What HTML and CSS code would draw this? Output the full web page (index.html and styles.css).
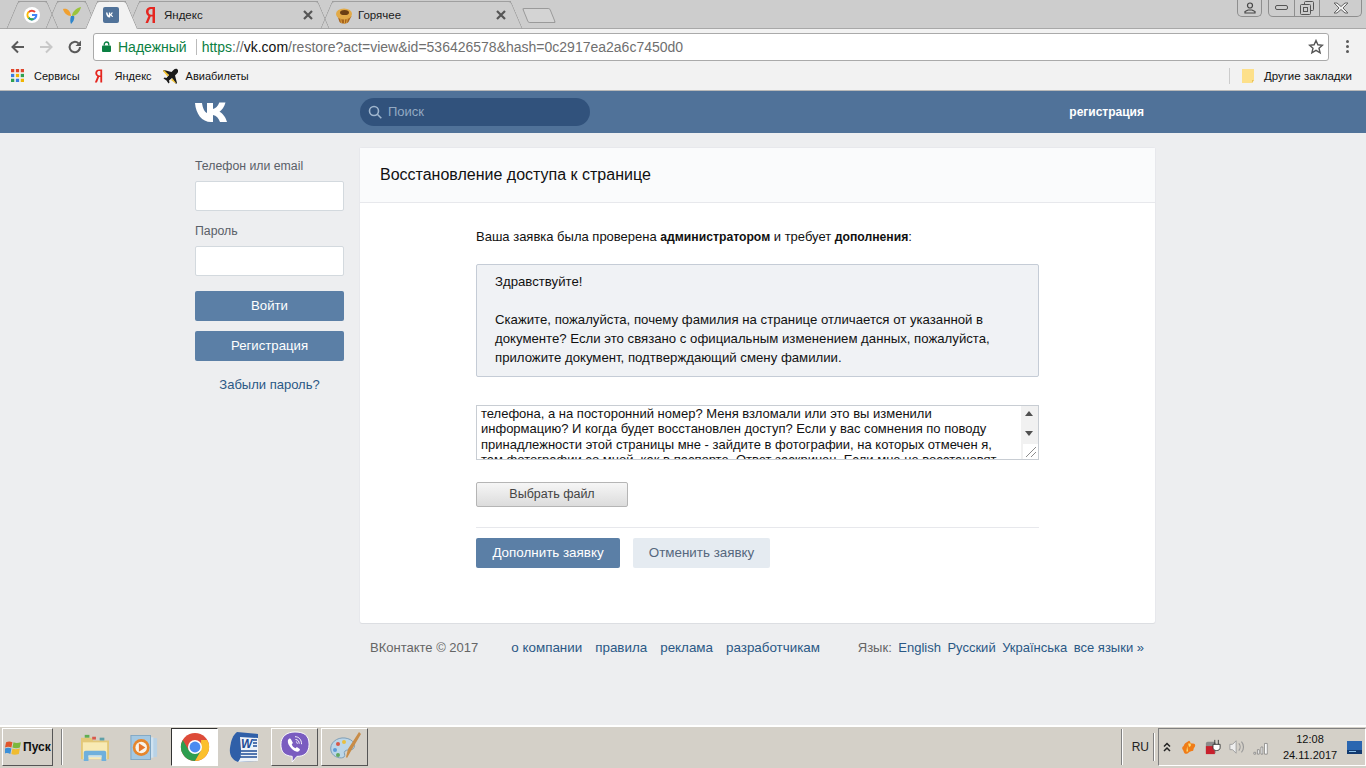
FILE: index.html
```html
<!DOCTYPE html>
<html lang="ru">
<head>
  <meta charset="UTF-8">
  <meta name="viewport" content="width=device-width, initial-scale=1.0">
  <title>Восстановление доступа к странице</title>
  <link rel="stylesheet" href="styles.css">
</head>
<body>
  <div class="browser">
    <div class="tabstrip">
      <div class="tab tab-pin">
        <svg class="tab-icon" viewBox="0 0 16 16"><circle cx="8" cy="8" r="8" fill="#fff"/><path d="M8 8h4.300a4.300 4.300 0 0 1-7.600 2.800" fill="none" stroke="#4285f4" stroke-width="2"/><path d="M4.700 5.200A4.300 4.300 0 0 1 11 5" fill="none" stroke="#ea4335" stroke-width="2"/><path d="M4.400 10.400A4.300 4.300 0 0 0 9.500 12" fill="none" stroke="#34a853" stroke-width="2"/><path d="M4.800 4.800A4.300 4.300 0 0 0 4.600 10.800" fill="none" stroke="#fbbc05" stroke-width="2"/></svg>
      </div>
      <div class="tab tab-pin">
        <svg class="tab-icon tab-icon-big" viewBox="0 0 18 17"><path d="M0 2c4-1 7 1 8 7C4 9 1 6 0 2z" fill="#f0a030"/><path d="M18 0c-1 5-5 9-9 9 0-4 4-8 9-9z" fill="#9cc43c"/><path d="M8 9h3c1 3-1 6-3 8-1-2-1-5 0-8z" fill="#2f86cc"/></svg>
      </div>
      <div class="tab tab-pin tab-active">
        <svg class="tab-icon" viewBox="0 0 16 16"><rect width="16" height="16" rx="2" fill="#507299"/><path d="M3 5.500h1.400c.3 1.500 1 2.700 1.500 2.900V5.500h1.300V7c.5 0 1-.7 1.300-1.500h1.300c-.2 1-.9 1.800-1.400 2.200.5.300 1.300 1 1.700 2.300H9c-.3-.9-1-1.500-1.800-1.600V10.500h-.4C4.500 10.500 3.200 8.500 3 5.500z" fill="#fff"/></svg>
      </div>
      <div class="tab tab-wide tab-ya">
        <svg class="tab-icon" viewBox="0 0 16 16"><path d="M12 0H8.200C5 0 3 2 3 4.800c0 2 .9 3.300 2.400 4.200L2.500 16H5l2.700-6.500H9.500V16H12zM9.500 7.700H8.300C6.600 7.700 5.500 6.600 5.500 4.800 5.500 3 6.700 2 8.300 2h1.200z" fill="#e52620"/></svg>
        <span class="tab-title">Яндекс</span>
        <svg class="tab-close" viewBox="0 0 10 10"><path d="M1 1l8 8M9 1l-8 8" stroke="#555" stroke-width="2.200"/></svg>
      </div>
      <div class="tab tab-wide tab-hot">
        <svg class="tab-icon tab-icon-big" viewBox="0 0 17 17"><path d="M2 9l2 6c2 2 7 2 9 0l3-6z" fill="#a8641c"/><ellipse cx="8.500" cy="7" rx="8" ry="5.500" fill="#e2aa48"/><ellipse cx="9" cy="5.500" rx="4.500" ry="2.600" fill="#6b3f14"/><path d="M5 11l1 5M9 12v5M12 11l-1 5" stroke="#d9a040"/></svg>
        <span class="tab-title">Горячее</span>
        <svg class="tab-close" viewBox="0 0 10 10"><path d="M1 1l8 8M9 1l-8 8" stroke="#555" stroke-width="2.200"/></svg>
      </div>
      <div class="tab-new"></div>
      <div class="window-btns">
        <div class="win-user">
          <svg viewBox="0 0 14 12" width="14" height="12"><circle cx="7" cy="3.500" r="2.500" fill="none" stroke="#444" stroke-width="1.200"/><path d="M2 11V9.500L5 8h4l3 1.500V11z" fill="none" stroke="#444" stroke-width="1.200"/></svg>
        </div>
        <div class="win-group">
          <div class="win-btn win-min"><svg viewBox="0 0 14 6" width="14" height="6"><rect x=".5" y=".5" width="12" height="4" rx="1.500" fill="none" stroke="#555"/></svg></div>
          <div class="win-btn win-max"><svg viewBox="0 0 14 14" width="14" height="14"><rect x="4.500" y=".5" width="9" height="9" rx="1" fill="none" stroke="#555"/><rect x=".5" y="3.500" width="10" height="10" rx="1" fill="#ccc" stroke="#555"/><rect x="3.500" y="6.500" width="4" height="4" fill="none" stroke="#555"/></svg></div>
          <div class="win-btn win-close"><svg viewBox="0 0 16 12" width="16" height="12"><path d="M1 1h3l4 3.500L12 1h3l-5 5 5 5h-3L8 7.500 4 11H1l5-5z" fill="#eee" stroke="#666"/></svg></div>
        </div>
      </div>
    </div>

    <div class="toolbar">
      <svg class="nav-icon" viewBox="0 0 16 16"><path d="M14 8H3M8 2.500L2.500 8 8 13.500" fill="none" stroke="#5a5a5a" stroke-width="2"/></svg>
      <svg class="nav-icon" viewBox="0 0 16 16"><path d="M2 8h11M8 2.500L13.500 8 8 13.500" fill="none" stroke="#c8c8c8" stroke-width="2"/></svg>
      <svg class="nav-icon" viewBox="0 0 16 16"><path d="M13 8a5.200 5.200 0 1 1-1.600-3.700" fill="none" stroke="#5a5a5a" stroke-width="2"/><path d="M14 1.500v5.500H8.500z" fill="#5a5a5a"/></svg>
      <div class="omnibox">
        <svg class="lock" viewBox="0 0 10 12"><path d="M2.500 5V3.500a2.500 2.500 0 0 1 5 0V5" fill="none" stroke="#0b8043" stroke-width="1.500"/><rect y="5" width="10" height="7" rx="1" fill="#0b8043"/></svg>
        <span class="secure">Надежный</span>
        <span class="omni-sep"></span>
        <span class="url"><span class="url-https">https</span>://<span class="url-host">vk.com</span>/restore?act=view&amp;id=536426578&amp;hash=0c2917ea2a6c7450d0</span>
        <svg class="star" viewBox="0 0 16 16"><path d="M8 1.500l1.900 4.300 4.600.4-3.500 3 1.100 4.600L8 11.400l-4.100 2.400L5 9.200l-3.500-3 4.600-.4z" fill="none" stroke="#555" stroke-width="1.400"/></svg>
      </div>
      <div class="menu-dots"><i></i><i></i><i></i></div>
    </div>

    <div class="bookmarks">
      <svg class="bm-icon apps" viewBox="0 0 12 12">
        <rect width="3" height="3" fill="#e0452c"/><rect x="4.500" width="3" height="3" fill="#e0452c"/><rect x="9" width="3" height="3" fill="#e0452c"/>
        <rect y="4.500" width="3" height="3" fill="#3a7de0"/><rect x="4.500" y="4.500" width="3" height="3" fill="#f0b400"/><rect x="9" y="4.500" width="3" height="3" fill="#2fa050"/>
        <rect y="9" width="3" height="3" fill="#2fa050"/><rect x="4.500" y="9" width="3" height="3" fill="#3a7de0"/><rect x="9" y="9" width="3" height="3" fill="#f0b400"/>
      </svg>
      <span class="bm-label bm-services">Сервисы</span>
      <svg class="bm-icon ya" viewBox="0 0 12 16"><path d="M10 1H7C4 1 2.500 2.700 2.500 4.800c0 1.800.8 2.900 2.200 3.800L2 15h2.300l2.400-6H8v6h2zM8 7.400H7C5.600 7.400 4.500 6.500 4.500 4.800 4.500 3.200 5.600 2.500 7 2.500h1z" fill="#e52620"/></svg>
      <span class="bm-label bm-yandex">Яндекс</span>
      <svg class="bm-icon plane" viewBox="0 0 16 16"><path d="M15 1c-1-.5-2.500 0-3.500 1L9.500 4 2 2 1 3l6 4-2.500 3-2-.5-1 1 3 2 2 3 1-1-.5-2 3-2.500 4 6 1-1-2-7.500 2-2c1-1 1.500-2.500 1-3.500z" fill="#1a1a1a"/><path d="M2 2l5 5-1.500 1.500L1 3zM9 12l1.500-1.500L14 15l-1 0z" fill="#f2c230"/></svg>
      <span class="bm-label">Авиабилеты</span>
      <span class="bm-spacer"></span>
      <span class="bm-sep"></span>
      <svg class="bm-icon folder" viewBox="0 0 12 14"><path d="M0 0h12v11l-2 3H0z" fill="#fde08a"/><path d="M10 14v-3h2z" fill="#e9c25a"/></svg>
      <span class="bm-label bm-other">Другие закладки</span>
    </div>

    <div class="vk-head">
      <div class="vk-head-inner">
        <svg class="vk-logo" viewBox="0 0 33 20"><path d="M0 1h7c.6 5 2.500 9 5 10V1h6v6c2.500-.5 5-3 6.300-6.500h6.200c-1 4.500-3.800 7.500-6 9.200 2.500 1.300 5.800 4.300 7.500 10.300h-7c-1.200-3.700-3.800-6.500-7-7V20h-2C7 20 .8 12 0 1z" fill="#fff"/></svg>
        <div class="search">
          <svg class="search-icon" viewBox="0 0 14 14"><circle cx="6" cy="6" r="4.500" fill="none" stroke="#a0b6ce" stroke-width="1.600"/><path d="M9.300 9.300l4 4" stroke="#a0b6ce" stroke-width="1.600"/></svg>
          <span>Поиск</span>
        </div>
        <a class="head-reg">регистрация</a>
      </div>
    </div>

    <div class="vk-body">
      <div class="vk-layout">
        <aside class="login">
          <div class="login-label">Телефон или email</div>
          <div class="login-input"></div>
          <div class="login-label login-label-2">Пароль</div>
          <div class="login-input"></div>
          <div class="login-btn login-btn-first">Войти</div>
          <div class="login-btn">Регистрация</div>
          <a class="forgot">Забыли пароль?</a>
        </aside>

        <div class="main-col">
          <section class="card">
            <h1 class="card-head">Восстановление доступа к странице</h1>
            <div class="card-body">
              <p class="intro">Ваша заявка была проверена <b>администратором</b> и требует <b>дополнения</b>:</p>
              <div class="msg">
                <p>Здравствуйте!</p>
                <p>Скажите, пожалуйста, почему фамилия на странице отличается от указанной в документе? Если это связано с официальным изменением данных, пожалуйста, приложите документ, подтверждающий смену фамилии.</p>
              </div>
              <div class="reply">
                <div class="reply-text">телефона, а на посторонний номер? Меня взломали или это вы изменили<br>информацию? И когда будет восстановлен доступ? Если у вас сомнения по поводу<br>принадлежности этой страницы мне - зайдите в фотографии, на которых отмечен я,<br>там фотографии со мной, как в паспорте. Ответ заскринен. Если мне не восстановят</div>
                <div class="scrollbar">
                  <span class="arrow-up"></span>
                  <span class="arrow-down"></span>
                  <span class="grip">
                    <svg viewBox="0 0 14 14" width="14" height="14"><path d="M3 13L13 3M8 13l5-5" stroke="#8c8c8c"/></svg>
                  </span>
                </div>
              </div>
              <div class="file-btn">Выбрать файл</div>
              <div class="actions">
                <div class="act-btn act-primary">Дополнить заявку</div>
                <div class="act-btn act-cancel">Отменить заявку</div>
              </div>
            </div>
          </section>

          <footer class="foot">
            <span class="copy">ВКонтакте © 2017</span>
            <nav class="foot-links"><a>о компании</a><a>правила</a><a>реклама</a><a>разработчикам</a></nav>
            <div class="foot-lang"><span class="copy">Язык:</span><a>English</a><a>Русский</a><a>Українська</a><a>все языки »</a></div>
          </footer>
        </div>
      </div>
    </div>

    <div class="taskbar">
      <div class="start">
        <svg viewBox="0 0 16 14" width="17" height="15"><path d="M1 2c2-1 4-1 6 0l-1 5c-2-1-4-1-6 0z" fill="#e0562c"/><path d="M8 2c2 1 4 1 7 0l-1 5c-2 1-5 1-7 0z" fill="#7cb83c"/><path d="M0 8c2-1 4-1 6 0l-1 5c-2-1-4-1-6 0z" fill="#3a8fd8"/><path d="M7 8c2 1 4 1 7 0l-1 5c-3 1-5 1-7 0z" fill="#f0bc30"/></svg>
        <span>Пуск</span>
      </div>
      <span class="task-sep"></span>
      <div class="task-item task-first">
        <svg viewBox="0 0 32 30" width="32" height="28"><path d="M1 5h11l2 3h17v20H1z" fill="#e3c878"/><rect x="3" y="10" width="26" height="18" fill="#f8eab4"/><rect x="5" y="2" width="5" height="3" fill="#5fae50"/><rect x="13" y="4" width="4" height="3" fill="#d8584c"/><rect x="21" y="5" width="5" height="3" fill="#5fa0a8"/><path d="M4 30V21q0-2 2-2h20q2 0 2 2v9h-5v-6H9v6z" fill="#6fb0dc"/><rect x="9" y="24" width="14" height="2" fill="#c8e2f0"/></svg>
      </div>
      <div class="task-item">
        <svg viewBox="0 0 30 26" width="28" height="25"><rect x="20" y="3" width="9" height="20" fill="#b8d2e6"/><rect x="16" y="2" width="9" height="22" fill="#cfe2f0"/><rect x="1" y="0" width="21" height="26" fill="#a4c8e2" stroke="#7ba3c2"/><circle cx="12" cy="13" r="9" fill="#e6862c"/><circle cx="12" cy="13" r="6.200" fill="#f8f4ec"/><path d="M9.500 8.500l7 4.500-7 4.500z" fill="#e6762c"/></svg>
      </div>
      <div class="task-item task-pressed">
        <svg viewBox="0 0 32 32" width="30" height="30"><circle cx="16" cy="16" r="15" fill="#dd4b39"/><path d="M3 8.500A15 15 0 0 0 16 31l6.500-11.250H9.500z" fill="#2e9e4f"/><path d="M29 8.500A15 15 0 0 1 16 31l6.500-11.250V8.500z" fill="#fbc02d"/><circle cx="16" cy="16" r="7.500" fill="#fff"/><circle cx="16" cy="16" r="5.800" fill="#4a8bf0"/></svg>
      </div>
      <div class="task-item task-word">
        <svg viewBox="0 0 30 32" width="30" height="32"><path d="M8 1l21 2v27l-20 1C4 29 0 25 1 17 2 9 4 4 8 1z" fill="#2f5fa8"/><path d="M11 6l18 1v23l-20 1c3-3 3-7 3-12z" fill="#eef3f9"/><text x="12" y="17" class="word-w">W</text><path d="M12 20h16M12 23h16M11 26h17" stroke="#1f4d96" stroke-width="1.600"/><path d="M24 9h4M24 12h4M24 15h4" stroke="#1f4d96" stroke-width="1.400"/></svg>
      </div>
      <div class="task-item task-raised">
        <svg viewBox="0 0 32 34" width="30" height="32"><path d="M16 1c9 0 15 3 15 13s-6 13-13 13l-5 6v-6C4 26 1 22 1 14S7 1 16 1z" fill="#7a5cc0" stroke="#fff"/><path d="M10 8c-2 1-2 3-1 6 2 4 5 7 9 8 2 0 4-2 3-3l-3-2-1.500 1.200c-2-.7-3.500-2.300-4-4.200l1.300-1.300-1.800-3.500c-.5-1-1.200-1.500-2-1.200z" fill="#fff"/><path d="M16 6c4 0 7 3 7 8M16.500 9c2.500 0 4 2 4 4.500M17 11.500c1 0 1.500 1 1.500 2" fill="none" stroke="#fff" stroke-width="1"/></svg>
      </div>
      <div class="task-item task-raised task-paint">
        <svg viewBox="0 0 32 32" width="32" height="32"><path d="M2 20C0 12 8 6 16 7s12 7 8 11c-3 2-6 0-8 2s1 4-1 6-11 1-13-6z" fill="#bcd6e8" stroke="#7f9fb8"/><circle cx="9" cy="13" r="2" fill="#d85848"/><circle cx="15" cy="11" r="2" fill="#e8c040"/><circle cx="6" cy="19" r="2" fill="#5c9ad8"/><circle cx="9" cy="24" r="2" fill="#60a860"/><path d="M30 1l2 2-10 17-4 7-1-1 2-8z" fill="#c88c48"/></svg>
      </div>
      <span class="task-spacer"></span>
      <span class="task-sep"></span>
      <span class="lang">RU</span>
      <span class="task-sep task-sep-thin"></span>
      <div class="tray">
        <svg class="chev" viewBox="0 0 8 10"><path d="M1 4.500l3-3 3 3M1 9l3-3 3 3" fill="none" stroke="#222" stroke-width="1.500"/></svg>
        <svg class="tray-icon" viewBox="0 0 18 18"><path d="M3 8c1-4 4-4 6-6 2 1 1 3 3 3s4 0 4 2-2 3-2 5-3 1-5 3-4 2-5 1-1-3-2-4-1-3 1-4z" fill="#f07c18"/><path d="M7 8l-1 6h2zM8 5l3 0 0 3-2 1z" fill="#fbe070"/></svg>
        <svg class="tray-icon" viewBox="0 0 18 18"><rect x="1" y="3" width="11" height="14" rx="2" fill="#8c8c8c"/><rect x="1" y="8" width="10" height="9" fill="#c8202c"/><path d="M9 6h8v4c0 2-2 3-4 3s-4-1-4-3zM11 1v5M15 1v5" fill="#fff" stroke="#333"/></svg>
        <svg class="tray-icon" viewBox="0 0 18 18"><path d="M1 6h3l4-4v14l-4-4H1z" fill="#eee" stroke="#999"/><path d="M11 5a6 6 0 0 1 0 8M14 3a9 9 0 0 1 0 12" fill="none" stroke="#999" stroke-width="1.300"/></svg>
        <svg class="tray-icon" viewBox="0 0 18 18"><path d="M1 15h2v2H1zM5 12h2v5H5zM9 9h2v8H9zM13 5h3v12h-3z" fill="#fff" stroke="#777" stroke-width=".8"/></svg>
        <div class="clock"><div>12:08</div><div>24.11.2017</div></div>
        <svg class="tray-desk" viewBox="0 0 15 13"><rect width="15" height="13" fill="#2a66b0"/><rect y="9" width="15" height="4" fill="#123a70"/><rect x="2" y="10" width="7" height="1" fill="#8cc0e8"/></svg>
      </div>
    </div>
  </div>
</body>
</html>
```

FILE: styles.css
```css
:root {
  --vk-blue: #507299;
  --vk-btn: #5b7fa6;
  --vk-link: #2a5885;
  --vk-bg: #edeef0;
  --win-bg: #d4d0c8;
  --tab-line: #9f9f9f;
}

* {
  box-sizing: border-box;
}

html, body {
  margin: 0;
  padding: 0;
  height: 100%;
  overflow: hidden;
}

body {
  font-family: "Liberation Sans", Arial, sans-serif;
  font-size: 13px;
  color: #000;
}

p {
  margin: 0;
}

.browser {
  width: 1366px;
  height: 768px;
  display: flex;
  flex-direction: column;
  overflow: hidden;
}

/* tab strip */
.tabstrip {
  height: 29px;
  flex: none;
  background: #cdcdcd;
  border-bottom: 1px solid #a8a8a8;
  display: flex;
  align-items: flex-end;
  padding-left: 11.500px;
  position: relative;
}

.tab {
  height: 28px;
  margin-bottom: -1px;
  display: flex;
  align-items: center;
  position: relative;
  z-index: 1;
  background: linear-gradient(var(--tab-line), var(--tab-line)) 6px 0 / calc(100% - 12px) 1px no-repeat;
}

.tab::before,
.tab::after {
  content: "";
  position: absolute;
  top: 0;
  bottom: 0;
  width: 16px;
  border-top: 1px solid var(--tab-line);
  z-index: -1;
}

.tab::before {
  left: 0;
  border-left: 1px solid var(--tab-line);
  border-radius: 3px 0 0 0;
  transform: skewX(-23deg);
}

.tab::after {
  right: 0;
  border-right: 1px solid var(--tab-line);
  border-radius: 0 3px 0 0;
  transform: skewX(23deg);
}

.tab-pin {
  width: 41px;
  justify-content: center;
  margin-right: -1.500px;
}

.tab-active {
  z-index: 3;
  margin-right: 1.500px;
  background:
    linear-gradient(var(--tab-line), var(--tab-line)) 6px 0 / calc(100% - 12px) 1px no-repeat,
    linear-gradient(#f2f2f2, #f2f2f2) 6px 0 / calc(100% - 12px) 100% no-repeat;
}

.tab-active::before,
.tab-active::after {
  background: #f2f2f2;
}

.tab-wide {
  width: 191px;
  margin-right: 2px;
  padding-left: 10px;
}

.tab-hot {
  padding-left: 9px;
  margin-right: 0;
}

.tab-icon {
  width: 16px;
  height: 16px;
  flex: none;
}

.tab-icon-big {
  width: 18px;
  height: 17px;
}

.tab-title {
  margin-left: 5px;
  font-size: 11.500px;
  flex: 1;
  color: #1a1a1a;
}

.tab-close {
  width: 10px;
  height: 10px;
  flex: none;
  margin-right: 11px;
}

.tab-new {
  width: 28px;
  height: 15px;
  margin-bottom: 5px;
  margin-left: 8px;
  background: #d4d4d4;
  border: 1px solid #9a9a9a;
  border-radius: 2px;
  transform: skewX(22deg);
}

.window-btns {
  position: absolute;
  top: 0;
  right: 4px;
  display: flex;
  gap: 6px;
}

.win-user,
.win-group {
  height: 17px;
  border: 1px solid #8e8e8e;
  border-top: none;
  border-radius: 0 0 5px 5px;
  display: flex;
  align-items: center;
}

.win-user {
  width: 25px;
  justify-content: center;
}

.win-btn {
  height: 16px;
  display: flex;
  align-items: center;
  justify-content: center;
  border-left: 1px solid #8e8e8e;
}

.win-min {
  width: 25px;
  border-left: none;
}

.win-max {
  width: 25px;
}

.win-close {
  width: 42px;
}

/* address bar */
.toolbar {
  height: 32px;
  flex: none;
  background: #f2f2f2;
  display: flex;
  align-items: center;
  padding: 3px 0 0 9.500px;
}

.nav-icon {
  width: 16px;
  height: 16px;
  flex: none;
  margin-right: 12.500px;
}

.omnibox {
  width: 1236px;
  height: 28px;
  margin-left: -2px;
  background: #fff;
  border: 1px solid #aaa;
  border-radius: 3px;
  display: flex;
  align-items: center;
  padding-left: 8px;
  font-size: 14px;
}

.lock {
  width: 9px;
  height: 11px;
  flex: none;
}

.secure {
  color: #0b8043;
  margin-left: 7px;
}

.omni-sep {
  width: 1px;
  height: 16px;
  background: #bbb;
  margin: 0 5px 0 9px;
}

.url {
  flex: 1;
  color: #6f6f6f;
  white-space: nowrap;
}

.url-https {
  color: #0b8043;
}

.url-host {
  color: #111;
}

.star {
  width: 16px;
  height: 16px;
  margin-right: 4px;
}

.menu-dots {
  margin-left: 17px;
  display: flex;
  flex-direction: column;
  gap: 2px;
}

.menu-dots i {
  width: 3px;
  height: 3px;
  background: #5a5a5a;
  border-radius: 50%;
}

/* bookmarks */
.bookmarks {
  height: 30px;
  flex: none;
  background: #f2f2f2;
  border-bottom: 1px solid #b9b9b9;
  display: flex;
  align-items: center;
  padding-left: 11px;
  font-size: 11px;
  color: #111;
}

.bm-icon {
  flex: none;
}

.apps {
  width: 13px;
  height: 13px;
}

.bm-services {
  margin-left: 10px;
  margin-right: 13px;
}

.ya {
  width: 11px;
  height: 16px;
}

.bm-yandex {
  margin-left: 11px;
  margin-right: 10px;
}

.plane {
  width: 16px;
  height: 16px;
  margin-right: 8px;
}

.bm-spacer {
  flex: 1;
}

.bm-sep {
  width: 1px;
  height: 16px;
  background: #ccc;
  margin-right: 12px;
}

.folder {
  width: 12px;
  height: 14px;
  margin-right: 10px;
}

.bm-other {
  font-size: 11.500px;
  margin-right: 14px;
}

/* vk header */
.vk-head {
  height: 42px;
  flex: none;
  background: var(--vk-blue);
}

.vk-head-inner {
  width: 949px;
  height: 100%;
  margin-left: 195px;
  display: flex;
  align-items: center;
}

.vk-logo {
  width: 33px;
  height: 20px;
  flex: none;
  margin-top: -1px;
}

.search {
  width: 230px;
  height: 28px;
  margin-left: 132px;
  background: #31527c;
  border-radius: 14px;
  display: flex;
  align-items: center;
  padding-left: 8px;
  padding-bottom: 1px;
  color: #93a9c2;
  font-size: 13px;
}

.search-icon {
  width: 14px;
  height: 14px;
  margin-right: 6px;
}

.head-reg {
  margin-left: auto;
  color: #fff;
  font-size: 12px;
  font-weight: bold;
}

/* page */
.vk-body {
  flex: 1;
  background: var(--vk-bg);
}

.vk-layout {
  display: flex;
  margin-left: 195px;
  padding-top: 15px;
}

.login {
  width: 149px;
  flex: none;
  margin-right: 16px;
  display: flex;
  flex-direction: column;
  padding-top: 11px;
}

.login-label {
  font-size: 12.300px;
  color: #5a6068;
  line-height: 15px;
  margin-bottom: 7px;
}

.login-label-2 {
  margin-top: 13px;
}

.login-input {
  height: 30px;
  background: #fff;
  border: 1px solid #d3d9de;
  border-radius: 2px;
}

.login-btn {
  height: 30px;
  margin-top: 10px;
  background: var(--vk-btn);
  border-radius: 2px;
  color: #fff;
  text-align: center;
  line-height: 30px;
  font-size: 13.200px;
}

.login-btn-first {
  margin-top: 15px;
}

.forgot {
  color: var(--vk-link);
  text-align: center;
  margin-top: 16px;
  font-size: 13px;
}

.main-col {
  width: 795px;
  flex: none;
}

.card {
  height: 475px;
  background: #fff;
  border-radius: 2px;
  box-shadow: 0 1px 0 0 #dcdee2, 0 0 0 1px #e7e8ec;
}

.card-head {
  margin: 0;
  height: 55px;
  padding: 0 20px;
  background: #fafbfc;
  border-bottom: 1px solid #e7e8ec;
  font-size: 16px;
  font-weight: normal;
  line-height: 53px;
  color: #111;
}

.card-body {
  padding: 26px 116px 0 116px;
}

.intro {
  line-height: 16px;
  font-size: 13px;
  color: #111;
}

.intro b {
  font-size: 12.200px;
}

.msg {
  height: 113px;
  margin-top: 19px;
  padding: 7px 18px;
  background: #f0f2f5;
  border: 1px solid #c5ccd6;
  border-radius: 2px;
  line-height: 19px;
  font-size: 13.200px;
  color: #111;
}

.msg p + p {
  margin-top: 19px;
}

.reply {
  height: 55px;
  margin-top: 28px;
  background: #fff;
  border: 1px solid #c8cdd3;
  display: flex;
  overflow: hidden;
}

.reply-text {
  flex: 1;
  padding: 0 4px;
  font-size: 13px;
  line-height: 15.400px;
  white-space: nowrap;
  color: #111;
}

.scrollbar {
  width: 17px;
  flex: none;
  position: relative;
  background: #f1f1f1;
}

.arrow-up,
.arrow-down {
  position: absolute;
  left: 4px;
  width: 0;
  height: 0;
  border-left: 4px solid transparent;
  border-right: 4px solid transparent;
}

.arrow-up {
  top: 5px;
  border-bottom: 5px solid #505050;
}

.arrow-down {
  top: 25px;
  border-top: 5px solid #505050;
}

.grip {
  position: absolute;
  right: 0;
  bottom: 0;
  width: 15px;
  height: 15px;
  background: #fff;
  display: flex;
}

.file-btn {
  width: 152px;
  height: 25px;
  margin-top: 22px;
  background: linear-gradient(#f6f6f6, #dcdcdc);
  border: 1px solid #b5b5b5;
  border-radius: 2px;
  text-align: center;
  line-height: 23px;
  font-size: 12.500px;
  color: #444;
}

.actions {
  margin-top: 20px;
  padding-top: 10px;
  border-top: 1px solid #e7e8ec;
  display: flex;
  gap: 13px;
}

.act-btn {
  height: 30px;
  border-radius: 2px;
  line-height: 30px;
  text-align: center;
  font-size: 13.400px;
}

.act-primary {
  width: 144px;
  background: var(--vk-btn);
  color: #fff;
}

.act-cancel {
  width: 137px;
  background: #e5ebf1;
  color: #55677d;
}

.foot {
  display: flex;
  align-items: center;
  margin-top: 17px;
  padding: 0 11px 0 10px;
  font-size: 13px;
  line-height: 16px;
}

.foot a {
  color: var(--vk-link);
}

.copy {
  color: #656565;
}

.foot-links {
  display: flex;
  gap: 13px;
  margin-left: 33px;
  font-size: 13.400px;
}

.foot-lang {
  display: flex;
  gap: 6.500px;
  margin-left: auto;
}

/* windows taskbar */
.taskbar {
  height: 43px;
  flex: none;
  background: var(--win-bg);
  border-top: 1px solid #fff;
  display: flex;
  align-items: center;
  padding-left: 2px;
  box-shadow: inset 0 1px 0 #fff;
}

.start {
  width: 51px;
  height: 38px;
  flex: none;
  display: flex;
  align-items: center;
  gap: 1px;
  padding-left: 2px;
  border: 1px solid;
  border-color: #fff #555 #555 #fff;
  font-size: 12px;
  font-weight: bold;
  color: #111;
}

.task-sep {
  width: 2px;
  height: 36px;
  margin-left: 8px;
  border-left: 1px solid #808080;
  border-right: 1px solid #fff;
  flex: none;
}

.task-sep-thin {
  height: 28px;
  margin-left: 4px;
}

.task-item {
  width: 48px;
  height: 38px;
  flex: none;
  display: flex;
  align-items: center;
  justify-content: center;
  margin-left: 1px;
}

.task-first {
  margin-left: 8px;
}

.task-pressed {
  width: 47px;
  margin-left: 3px;
  background: #fff;
  border: 1px solid;
  border-color: #333 #fff #fff #333;
}

.task-word {
  margin-left: 2px;
}

.task-raised {
  width: 47px;
  margin-left: 3px;
  border: 1px solid;
  border-color: #fff #555 #555 #fff;
}

.word-w {
  font-family: "Liberation Sans", Arial, sans-serif;
  font-size: 12px;
  font-weight: bold;
  font-style: italic;
  fill: #1f4d96;
}

.task-spacer {
  flex: 1;
}

.lang {
  font-size: 12px;
  color: #222;
  margin-left: 9px;
}

.tray {
  width: 208px;
  height: 38px;
  flex: none;
  margin-left: 3px;
  border: 1px solid;
  border-color: #808080 #fff #fff #808080;
  display: flex;
  align-items: center;
  padding-left: 4px;
}

.chev {
  width: 8px;
  height: 10px;
  flex: none;
}

.tray-icon {
  width: 16px;
  height: 16px;
  margin-left: 8px;
  flex: none;
}

.chev + .tray-icon {
  margin-left: 10px;
}

.clock {
  width: 60px;
  margin-left: 11px;
  text-align: center;
  font-size: 11px;
  line-height: 16px;
  color: #111;
}

.tray-desk {
  width: 15px;
  height: 13px;
  margin-left: 7px;
  flex: none;
}
```
